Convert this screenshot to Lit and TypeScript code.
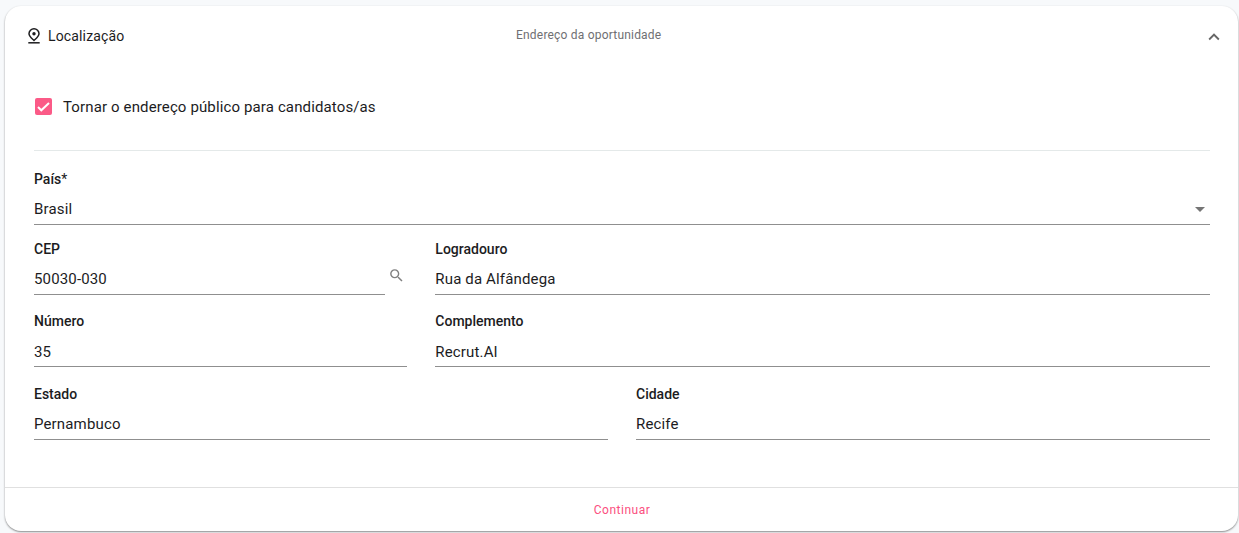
import { LitElement, html, css } from "lit";
import { customElement } from "lit/decorators.js";

@customElement("app-root")
export class AppRoot extends LitElement {
  static styles = css`
    :host { display: block; background: #f7f9fb; height: 533px; box-sizing: border-box; padding: 6px 1px 2px 5px; font-family: Roboto, "Liberation Sans", sans-serif; color: #1c1c1e; overflow: hidden; }
    .card { background: #fff; border-radius: 16px; height: 525px; box-shadow: 0 1px 2px rgba(0,0,0,.45); display: flex; flex-direction: column; }
    .header { height: 58px; display: grid; grid-template-columns: 492px auto 1fr; align-items: center; padding: 0 13px 0 20px; }
    .title { display: flex; align-items: center; gap: 5px; font-size: 14px; letter-spacing: .15px; padding-top: 1px; }
    .title svg { display: block; }
    .sub { font-size: 12px; color: #6f6f73; letter-spacing: .2px; margin-left: -1px; }
    .chev { justify-self: end; display: block; margin-top: 3px; }
    .body { flex: 1; padding: 0 28px 0 29px; }
    .check { display: flex; align-items: center; gap: 11px; height: 87px; font-size: 15px; letter-spacing: .13px; border-bottom: 1px solid #e4e9e9; box-sizing: border-box; padding-bottom: 1px; }
    .box { width: 17px; height: 17px; margin-left: 1px; background: #fb5a87; border-radius: 2px; display: flex; align-items: center; justify-content: center; }
    .box svg { display: block; }
    .grid { display: grid; grid-template-columns: repeat(6, 1fr); column-gap: 28px; padding-top: 20px; }
    .f { position: relative; display: flex; flex-direction: column; height: 70px; }
    .s6 { grid-column: span 6; } .s2 { grid-column: span 2; } .s4 { grid-column: span 4; } .s3 { grid-column: span 3; }
    .lab { font-size: 14px; font-weight: 500; line-height: 16px; height: 16px; }
    .lab i { font-style: normal; font-weight: 400; }
    .val { font-size: 15px; line-height: 20px; margin-top: 12px; padding-bottom: 5px; border-bottom: 1px solid #8f8f8f; display: flex; justify-content: space-between; align-items: center; letter-spacing: .15px; }
    .val svg { margin-right: 5px; }
    .r2 { height: 72px; } .r3 { height: 73px; }
    .r3 .val { margin-top: 13px; padding-bottom: 4px; }
    .cep { margin-right: 22px; }
    .search { position: absolute; right: 2px; top: 26px; }
    .foot { height: 43px; border-top: 1px solid #e0e0e0; display: flex; align-items: center; justify-content: center; font-size: 12px; font-weight: 400; color: #fb4f80; letter-spacing: .5px; padding-left: 1px; }
  `;

  render() {
    return html`<div class="card">
      <div class="header">
        <div class="title">
          <svg width="18" height="18" viewBox="0 0 18 18" fill="none" stroke="#1c1c1e" stroke-width="1.5"><path d="M9 1.7a5 5 0 0 0-5 5c0 2.6 2.8 4.7 5 6.8 2.2-2.1 5-4.2 5-6.8a5 5 0 0 0-5-5z" /><circle cx="9" cy="6.7" r="1.7" fill="#1c1c1e" stroke="none"/><path d="M3.3 15.8h11.4"/></svg>
          <span>Localização</span>
        </div>
        <div class="sub">Endereço da oportunidade</div>
        <svg class="chev" width="22" height="22" viewBox="0 0 24 24" fill="#666"><path d="M12 8l-6 6 1.41 1.41L12 10.83l4.59 4.58L18 14z"/></svg>
      </div>
      <div class="body">
        <div class="check">
          <div class="box"><svg width="17" height="17" viewBox="0 0 17 17" fill="none" stroke="#fff" stroke-width="2"><path d="M3 9l3.3 3.3L14 5"/></svg></div>
          <span>Tornar o endereço público para candidatos/as</span>
        </div>
        <div class="grid">
          <div class="f s6"><div class="lab">País<i>*</i></div><div class="val"><span>Brasil</span><svg width="10" height="5" viewBox="0 0 10 5" fill="#757575"><path d="M0 0h10L5 5z"/></svg></div></div>
          <div class="f s2 r2"><div class="lab">CEP</div><div class="val cep"><span>50030-030</span></div>
            <svg class="search" width="17" height="17" viewBox="0 0 24 24" fill="#808080"><path d="M15.5 14h-.79l-.28-.27A6.47 6.47 0 0 0 16 9.5 6.5 6.5 0 1 0 9.5 16c1.61 0 3.09-.59 4.23-1.57l.27.28v.79l5 4.99L20.49 19l-4.99-5zm-6 0C7.01 14 5 11.99 5 9.5S7.01 5 9.5 5 14 7.01 14 9.5 11.99 14 9.5 14z"/></svg>
          </div>
          <div class="f s4 r2"><div class="lab">Logradouro</div><div class="val"><span>Rua da Alfândega</span></div></div>
          <div class="f s2 r3"><div class="lab">Número</div><div class="val"><span>35</span></div></div>
          <div class="f s4 r3"><div class="lab">Complemento</div><div class="val"><span>Recrut.AI</span></div></div>
          <div class="f s3"><div class="lab">Estado</div><div class="val"><span>Pernambuco</span></div></div>
          <div class="f s3"><div class="lab">Cidade</div><div class="val"><span>Recife</span></div></div>
        </div>
      </div>
      <div class="foot"><span>Continuar</span></div>
    </div>`;
  }
}
